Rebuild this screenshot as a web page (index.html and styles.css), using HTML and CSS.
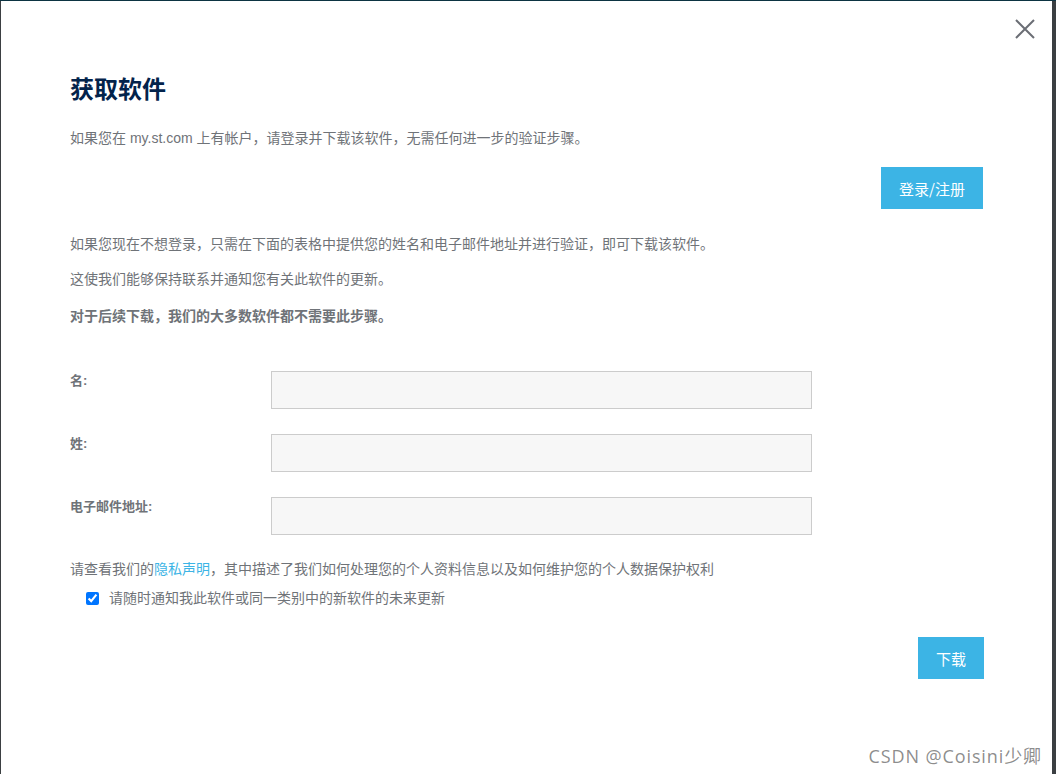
FILE: index.html
```html
<!DOCTYPE html>
<html lang="zh-CN">
<head>
<meta charset="utf-8">
<title>获取软件</title>
<link rel="stylesheet" href="styles.css">
</head>
<body>
<div class="modal">
  <button class="close" aria-label="关闭">
    <svg width="20" height="20" viewBox="0 0 20 20"><path d="M1 1 L19 19 M19 1 L1 19" stroke="#6b6e75" stroke-width="2" fill="none"/></svg>
  </button>
  <h1 class="title">获取软件</h1>
  <p class="text p1">如果您在 my.st.com 上有帐户，请登录并下载该软件，无需任何进一步的验证步骤。</p>
  <div class="btn-row login-row"><button class="btn btn-login">登录/注册</button></div>
  <p class="text p2">如果您现在不想登录，只需在下面的表格中提供您的姓名和电子邮件地址并进行验证，即可下载该软件。</p>
  <p class="text p3">这使我们能够保持联系并通知您有关此软件的更新。</p>
  <p class="text p4">对于后续下载，我们的大多数软件都不需要此步骤。</p>
  <form class="form">
    <div class="row"><label class="label">名:</label><input class="field" type="text"></div>
    <div class="row"><label class="label">姓:</label><input class="field" type="text"></div>
    <div class="row"><label class="label">电子邮件地址:</label><input class="field" type="text"></div>
  </form>
  <p class="text privacy">请查看我们的<a class="link" href="#">隐私声明</a>，其中描述了我们如何处理您的个人资料信息以及如何维护您的个人数据保护权利</p>
  <label class="check-row"><input class="check" type="checkbox" checked><span>请随时通知我此软件或同一类别中的新软件的未来更新</span></label>
  <div class="btn-row dl-row"><button class="btn btn-dl">下载</button></div>
  <div class="watermark">CSDN @Coisini少卿</div>
</div>
</body>
</html>
```
FILE: styles.css
```css
html, body {
  margin: 0;
  padding: 0;
}
body {
  background: #3b3f42;
  border-top: 1px solid #0c3442;
  height: 773px;
  overflow: hidden;
  font-family: "Liberation Sans", "Noto Sans CJK SC", sans-serif;
}
.modal {
  position: relative;
  margin-left: 1px;
  width: 1051px;
  height: 773px;
  background: #fff;
  box-sizing: border-box;
  padding: 71px 69px 0 69px;
  color: #6f7378;
}
.close {
  position: absolute;
  top: 18px;
  right: 17px;
  width: 20px;
  height: 20px;
  padding: 0;
  border: 0;
  background: none;
  cursor: pointer;
}
.close svg { display: block; }
.title {
  margin: 0;
  font-size: 24px;
  line-height: 32px;
  font-weight: 700;
  color: #03234b;
  font-family: "Noto Sans CJK SC", sans-serif;
}
.text {
  margin: 0;
  font-size: 14px;
  line-height: 20px;
}
.p1 { margin-top: 24px; }
.btn-row {
  display: flex;
  justify-content: flex-end;
}
.login-row { margin-top: 19px; }
.btn {
  border: 0;
  background: #3cb4e5;
  color: #fff;
  font-family: "Noto Sans CJK SC", sans-serif;
  font-size: 15px;
  font-weight: 400;
  height: 42px;
  padding: 0;
  cursor: pointer;
}
.btn-login { width: 102px; }
.btn-dl { width: 66px; }
.p2 { margin-top: 25px; }
.p3 { margin-top: 15px; }
.p4 { margin-top: 17px; font-weight: 700; }
.form {
  margin-top: 45px;
  display: flex;
  flex-direction: column;
  gap: 25px;
}
.row {
  display: flex;
  align-items: flex-start;
}
.label {
  width: 201px;
  font-size: 13px;
  line-height: 20px;
  font-weight: 700;
  color: #6f7378;
}
.field {
  width: 541px;
  height: 38px;
  box-sizing: border-box;
  border: 1px solid #cccccc;
  background: #f7f7f7;
  margin: 0;
  padding: 0 10px;
  font-size: 14px;
}
.privacy { margin-top: 24px; }
.link {
  color: #3cb4e5;
  text-decoration: none;
}
.check-row {
  margin-top: 9px;
  display: flex;
  align-items: center;
  font-size: 14px;
  line-height: 20px;
  padding-left: 16px;
}
.check {
  width: 13px;
  height: 13px;
  margin: 0 10px 0 0;
  accent-color: #0075ff;
}
.dl-row { margin-top: 29px; margin-right: -1px; }
.watermark {
  position: absolute;
  right: 10px;
  bottom: 6px;
  font-family: "Open Sans", "Noto Sans CJK SC", sans-serif;
  font-size: 18px;
  color: rgba(120, 120, 120, 0.85);
  letter-spacing: 0.9px;
}
```
